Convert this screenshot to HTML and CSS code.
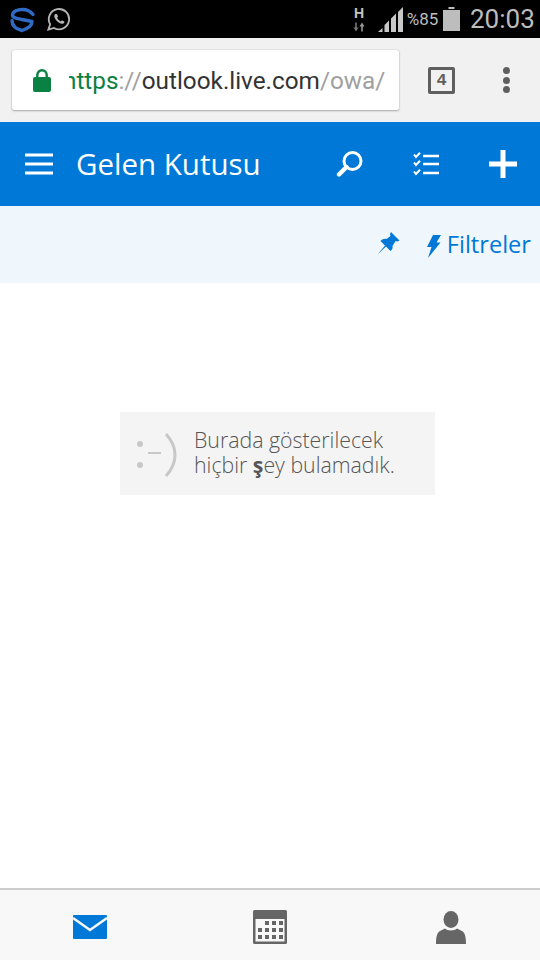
FILE: index.html
```html
<!DOCTYPE html>
<html lang="tr">
<head>
<meta charset="utf-8">
<title>Gelen Kutusu</title>
<link rel="stylesheet" href="styles.css">
</head>
<body>
<div class="app">
  <div class="status">
    <div class="status-left">
      <svg class="ic-s" width="27" height="27" viewBox="0 0 27 27"><path d="M24 8.500 C21 4.500 17 3.500 13.500 3.500 C8 3.500 3.500 5.500 3.500 9 C3.500 12 8 12.500 13 13.500 L23 15.500 C23 20 19 22.500 13 24.500 C7 23 3 19.500 3 14.500" fill="none" stroke="#2f6bc4" stroke-width="3.400" stroke-linejoin="round" stroke-linecap="round"/></svg>
      <svg class="ic-wa" width="24" height="24" viewBox="0 0 26 26"><path d="M1.500 24.500 L3.400 18.600 A11 11 0 1 1 7.500 22.700 Z" fill="none" stroke="#b5b5b5" stroke-width="2"/><path d="M9 7.500 C7.500 8.500 7.500 10.500 9 13 C10.500 15.500 13.500 18 16 18.200 C17.800 18.200 19 17 18.800 15.600 L16.200 14.300 L15 15.600 C13.500 15 11.600 13.200 10.900 11.600 L12 10.400 L10.800 7.700 Z" fill="#b5b5b5"/></svg>
    </div>
    <div class="status-right">
      <div class="net"><span class="net-h">H</span><svg width="12" height="10" viewBox="0 0 12 10"><path d="M3 9.500 L.5 5.500 H2.200 V.5 H3.800 V5.500 H5.500 Z" fill="#777"/><path d="M9 .5 L11.500 4.500 H9.800 V9.500 H8.200 V4.500 H6.500 Z" fill="#999"/></svg></div>
      <svg class="ic-sig" width="25" height="25" viewBox="0 0 25 25"><path d="M0 25 L4.500 21 V25 Z M6.500 25 V18 L11 13.500 V25 Z M13 25 V11.500 L18 6.500 V25 Z M20 25 V5 L25 0 V25 Z" fill="#c8c8c8"/></svg>
      <span class="pct">%85</span>
      <svg class="ic-bat" width="17" height="24" viewBox="0 0 17 24"><path d="M5.500 0 H11.500 V2 H5.500 Z M0 3 H17 V24 H0 Z" fill="#bdbdbd"/></svg>
      <span class="time">20:03</span>
    </div>
  </div>

  <div class="browser">
    <div class="urlbox">
      <svg class="ic-lock" width="18" height="23" viewBox="0 0 18 23"><path d="M4.300 9 V6 A4.700 4.700 0 0 1 13.700 6 V9" fill="none" stroke="#0b8043" stroke-width="2.400"/><rect y="8" width="18" height="15" rx="2" fill="#0b8043"/></svg>
      <div class="url"><span class="url-text"><span class="u-green">https</span><span class="u-grey">://</span>outlook.live.com<span class="u-grey">/owa/</span></span></div>
    </div>
    <div class="tabs"><span class="tabs-n">4</span></div>
    <div class="dots"><i></i><i></i><i></i></div>
  </div>

  <header class="appbar">
    <svg class="ic-menu" width="28" height="22" viewBox="0 0 28 22"><path d="M0 2 H28 M0 11 H28 M0 20 H28" stroke="#fff" stroke-width="3"/></svg>
    <h1 class="title">Gelen Kutusu</h1>
    <svg class="ic-search" width="28" height="28" viewBox="0 0 28 28"><circle cx="16.500" cy="11" r="8.500" fill="none" stroke="#fff" stroke-width="3"/><path d="M10.500 17 L3 24.500" stroke="#fff" stroke-width="4.400" stroke-linecap="round"/></svg>
    <svg class="ic-tasks" width="27" height="24" viewBox="0 0 27 24"><path d="M10 4 H26 M10 12 H26 M10 21 H26" stroke="#fff" stroke-width="2.400"/><path d="M1 2.500 L3 5 L7 .8 M1 10.500 L3 13 L7 8.800 M1 19.500 L3 22 L7 17.800" fill="none" stroke="#fff" stroke-width="2"/></svg>
    <svg class="ic-plus" width="28" height="28" viewBox="0 0 28 28"><path d="M14 0 V28 M0 14 H28" stroke="#fff" stroke-width="5"/></svg>
  </header>

  <div class="filterbar">
    <svg class="ic-pin" width="23" height="23" viewBox="0 0 23 23"><path d="M14 0 L22.500 8.500 L20.500 9.500 L18.500 9 L15.500 14 C16 16 15 18 13.500 19 L9 14.500 L.5 22.500 L8 13.500 L3.500 9 C5 7.500 7.500 6.500 9.500 7 L13.500 4 L13 2 Z" fill="#0078d7"/></svg>
    <svg class="ic-bolt" width="14" height="23" viewBox="0 0 14 23"><path d="M6 0 H14 L9.500 7.500 H13.500 L1 23 L4.500 12 H0 Z" fill="#0078d7"/></svg>
    <span class="filter-text">Filtreler</span>
  </div>

  <main class="content">
    <div class="empty">
      <div class="smiley">
        <span class="dot"></span><span class="dot dot-2"></span>
        <span class="dash"></span>
        <svg class="paren" width="12" height="44" viewBox="0 0 12 44"><path d="M1 1 C13 14 13 30 1 43" fill="none" stroke="#c8c8c8" stroke-width="3"/></svg>
      </div>
      <p class="empty-text">Burada gösterilecek<br>hiçbir <b>ş</b>ey bulamadık.</p>
    </div>
  </main>

  <nav class="tabbar">
    <svg width="34" height="24" viewBox="0 0 34 24"><path d="M1 0 H33 A1 1 0 0 1 34 1 V23 A1 1 0 0 1 33 24 H1 A1 1 0 0 1 0 23 V1 A1 1 0 0 1 1 0 Z" fill="#0078d7"/><path d="M0 3 L17 15 L34 3" fill="none" stroke="#f8f8f8" stroke-width="2.600"/></svg>
    <svg width="34" height="34" viewBox="0 0 34 34"><rect width="34" height="34" rx="1.500" fill="#666"/><rect x="2.500" y="9" width="29" height="22.500" fill="#f8f8f8"/><g fill="#666"><rect x="12" y="11" width="4" height="4"/><rect x="19" y="11" width="4" height="4"/><rect x="26" y="11" width="4" height="4"/><rect x="5" y="18" width="4" height="4"/><rect x="12" y="18" width="4" height="4"/><rect x="19" y="18" width="4" height="4"/><rect x="26" y="18" width="4" height="4"/><rect x="5" y="25" width="4" height="4"/><rect x="12" y="25" width="4" height="4"/><rect x="19" y="25" width="4" height="4"/><rect x="26" y="25" width="4" height="4"/></g></svg>
    <svg class="ic-person" width="30" height="33" viewBox="0 0 30 33"><ellipse cx="15" cy="8.500" rx="7.500" ry="8.500" fill="#666"/><path d="M0 33 C0 26 1 21.500 4 20 L9 17.500 C11 20 19 20 21 17.500 L26 20 C29 21.500 30 26 30 33 Z" fill="#666"/></svg>
  </nav>
</div>
</body>
</html>
```

FILE: styles.css
```css
html, body { margin: 0; padding: 0; }
body { width: 540px; height: 960px; overflow: hidden; background: #fff; }
.app { display: flex; flex-direction: column; width: 540px; height: 960px; font-family: "Open Sans", "Noto Sans", sans-serif; }

.status { height: 38px; background: #000; display: flex; justify-content: space-between; align-items: center; flex: none; }
.status-left { display: flex; align-items: center; gap: 11px; padding-left: 9px; }
.status-right { display: flex; align-items: center; padding-right: 4px; font-family: Roboto, sans-serif; color: #bdbdbd; }
.net { display: flex; flex-direction: column; align-items: center; gap: 3px; width: 14px; margin-right: 12px; }
.net-h { font: 700 14px/12px "Liberation Sans", sans-serif; color: #c4c4c4; }
.ic-sig { margin-right: 3px; }
.pct { font-size: 17px; line-height: 38px; width: 33px; text-align: center; }
.ic-bat { margin: 0 10px 0 4px; }
.time { font-size: 26px; line-height: 38px; width: 66px; white-space: nowrap; }

.browser { height: 84px; background: #f1f1f1; display: flex; align-items: center; flex: none; }
.urlbox { width: 387px; height: 60px; margin-left: 12px; box-sizing: border-box; background: #fff; border-radius: 2px; box-shadow: 0 0 1px #999, 0 1px 2px #aaa; display: flex; align-items: center; }
.ic-lock { margin-left: 21px; flex: none; }
.url { width: 316px; margin-left: 18px; overflow: hidden; white-space: nowrap; font: 24.300px Roboto, sans-serif; color: #333; }
.url-text { display: inline-block; margin-left: -6px; }
.u-green { color: #0b8043; }
.u-grey { color: #a0a0a0; }
.tabs { width: 27px; height: 27px; margin-left: 29px; border: 3px solid #5f5f5f; box-sizing: border-box; border-radius: 2px; display: flex; align-items: center; justify-content: center; }
.tabs-n { font: 700 17px "Liberation Mono", monospace; color: #5f5f5f; }
.dots { display: flex; flex-direction: column; gap: 2.500px; margin-left: 48px; }
.dots i { display: block; width: 7px; height: 7px; border-radius: 50%; background: #5f5f5f; }

.appbar { height: 84px; background: #0078d7; display: flex; align-items: center; flex: none; }
.ic-menu { margin-left: 25px; }
.title { margin: 0 0 0 23px; width: 260px; font-size: 29.500px; font-weight: 400; color: #fff; line-height: 84px; white-space: nowrap; }
.ic-tasks { margin-left: 49px; }
.ic-plus { margin-left: 49px; }

.filterbar { height: 77px; background: #eff6fc; display: flex; align-items: center; justify-content: flex-end; padding-right: 9px; flex: none; }
.ic-pin { margin: -2px 27px 0 0; }
.ic-bolt { margin: 3px 6px 0 0; }
.filter-text { font-size: 23.600px; line-height: 30px; margin-top: -2px; color: #0078d7; }

.content { flex: 1; display: flex; flex-direction: column; align-items: flex-start; padding: 129px 0 0 120px; box-sizing: border-box; }
.empty { width: 315px; height: 83px; background: #f4f4f4; display: flex; align-items: center; }
.smiley { position: relative; width: 74px; height: 83px; flex: none; }
.dot { position: absolute; left: 17px; top: 29px; width: 6px; height: 6px; border-radius: 50%; background: #c8c8c8; }
.dot-2 { top: 50px; }
.dash { position: absolute; left: 28px; top: 40px; width: 13px; height: 2px; background: #c8c8c8; }
.paren { position: absolute; left: 45px; top: 21px; }
.empty-text { margin: -4px 0 0; font-size: 21.300px; font-weight: 300; line-height: 25px; color: #555; white-space: nowrap; }
.empty-text b { font-weight: 700; }

.tabbar { height: 72px; box-sizing: border-box; border-top: 2px solid #ccc; padding-top: 4px; background: #f8f8f8; display: grid; grid-template-columns: 180px 180px 180px; place-items: center; flex: none; }
.ic-person { margin-left: 2px; }
```
